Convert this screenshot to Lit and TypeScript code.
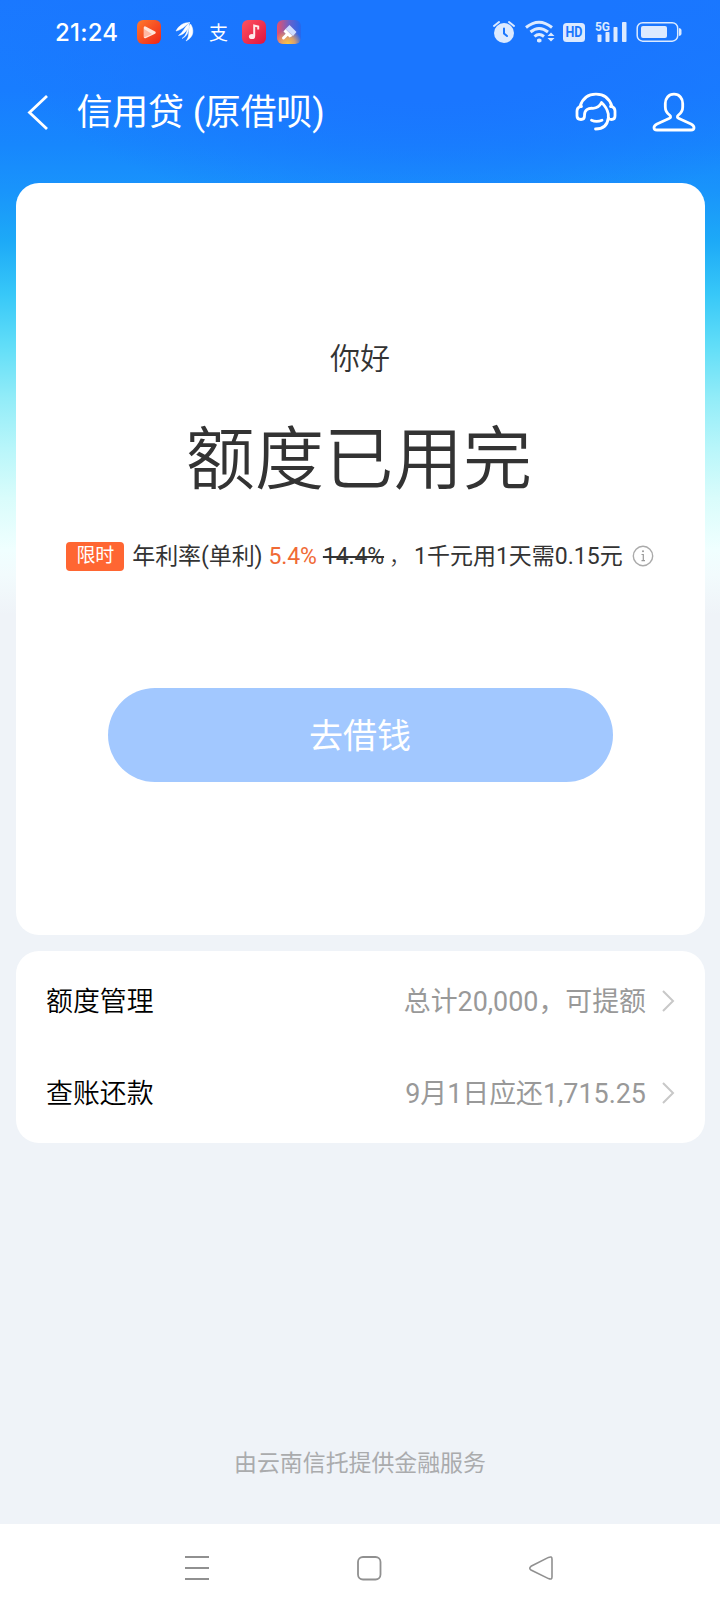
import { LitElement, html, css } from "lit";
import { customElement } from "lit/decorators.js";

@customElement("status-bar")
class StatusBar extends LitElement {
  static styles = css`
    :host { display: flex; height: 64px; align-items: center; padding: 0 38px 0 55px; color: #fff; }
    svg { display: block; flex: none; }
    .time { font: 500 24px/30px Inter, Roboto, sans-serif; width: 82px; letter-spacing: 0.2px; padding-top: 2px; white-space: nowrap; }
    .apps { display: flex; align-items: center; }
    .wing { margin-left: 14px; }
    .zhi { width: 20px; margin: 0 13px 0 14px; font: 400 19px/24px "Noto Sans CJK SC", sans-serif; }
    .pen { margin-left: 11px; }
    .system { display: flex; align-items: center; margin-left: auto; }
    text { font-family: Roboto, sans-serif; font-weight: 700; }
  `;
  render() {
    return html`
      <span class="time">21:24</span>
      <div class="apps">
        <svg width="24" height="24" viewBox="0 0 24 24">
          <defs><linearGradient id="v" x1="0" y1="0" x2="1" y2="1"><stop offset="0" stop-color="#ff7a2e" /><stop offset="1" stop-color="#ee2418" /></linearGradient></defs>
          <rect width="24" height="24" rx="6" fill="url(#v)" />
          <path d="M8 7.500V17L17.500 12.500Z" fill="#ffe6dd" stroke="#ffe6dd" stroke-width="2.500" stroke-linejoin="round" />
          <path d="M7 9V17.500L15 14Z" fill="#ffb9a5" />
        </svg>
        <svg class="wing" width="20" height="22" viewBox="0 0 20 22">
          <path d="M1 10C4 4.500 8 1.500 15 1.500C11 3.500 8 8.500 1 10ZM3.500 14.500C9 11 9.500 5 14.500 2.500C13.500 7 10 14 3.500 14.500ZM11 20C15.500 15 12.500 8.500 15.500 3C19 8 19.500 16 11 20ZM7 17.500C12.500 14 11.500 8 14.500 4.500C13 9 14 14.500 7 17.500Z" fill="#fff" stroke="#fff" stroke-width=".5" />
        </svg>
        <span class="zhi">支</span>
        <svg width="24" height="24" viewBox="0 0 24 24">
          <defs><linearGradient id="m" x1="0" y1="0" x2="1" y2="1"><stop offset="0" stop-color="#ff5360" /><stop offset="1" stop-color="#df123f" /></linearGradient></defs>
          <rect width="24" height="24" rx="6" fill="url(#m)" />
          <ellipse cx="10" cy="16.500" rx="3.100" ry="2.600" fill="#ffe9ea" />
          <path d="M12.200 16V5.500L16.200 6.500V9.500" fill="none" stroke="#ffe9ea" stroke-width="2" />
        </svg>
        <svg class="pen" width="24" height="24" viewBox="0 0 24 24">
          <defs>
            <linearGradient id="p" x1="0" y1="0" x2="1" y2="0"><stop offset="0" stop-color="#e9506b" /><stop offset=".5" stop-color="#6a62c8" /><stop offset="1" stop-color="#2468ee" /></linearGradient>
            <radialGradient id="q" cx=".45" cy="1" r=".6"><stop offset="0" stop-color="#ffc83c" /><stop offset=".5" stop-color="#f5ae58" stop-opacity=".8" /><stop offset="1" stop-color="#f5ae58" stop-opacity="0" /></radialGradient>
          </defs>
          <rect width="24" height="24" rx="6" fill="url(#p)" />
          <rect width="24" height="24" rx="6" fill="url(#q)" />
          <path d="M10 14.500L6.500 18" stroke="#fff" stroke-width="3" stroke-linecap="round" />
          <path d="M12.500 5L19.500 12L16 16L8.500 9Z" fill="#cfdcff" />
          <path d="M8.500 9L15.500 16L12.500 17.500L6.500 11.500Z" fill="#fff" />
        </svg>
      </div>
      <div class="system">
        <svg width="190" height="26" viewBox="0 0 190 26" fill="#dceaff">
          <circle cx="12" cy="14" r="10" />
          <path d="M2 7L7 3M17 3L22 7" stroke="#dceaff" stroke-width="2" stroke-linecap="round" />
          <path d="M12 9.500V14.500L15 17" fill="none" stroke="#1a77fe" stroke-width="2" stroke-linecap="round" />
          <g fill="none" stroke="#dceaff" stroke-width="3">
            <path d="M34 8.500Q47 -2 60 8.500M38.500 13Q47 6 56 13M42.500 17.500Q47 13.500 52 17.500" />
          </g>
          <path d="M45 20.500Q47.200 18.500 49.500 20.500V22.500Q47 24.500 45 22.500ZM55.500 17L59 13.500L62.500 17ZM55.500 19H62.500L59 22.500Z" />
          <rect x="71" y="4" width="22" height="19" rx="3.500" />
          <text x="82" y="18.400" font-size="14" text-anchor="middle" fill="#1a77fe" textLength="17" lengthAdjust="spacingAndGlyphs">HD</text>
          <text x="103" y="11.500" font-size="13.500" textLength="15" lengthAdjust="spacingAndGlyphs">5G</text>
          <rect x="105.500" y="15.500" width="4" height="7.500" rx=".8" /><rect x="113.500" y="13" width="4" height="10" rx=".8" />
          <rect x="121.500" y="8" width="4" height="15" rx=".8" /><rect x="130" y="3" width="4.500" height="20" rx=".8" />
          <rect x="145.200" y="3.700" width="40.500" height="18.500" rx="5.500" fill="none" stroke="#dceaff" stroke-width="1.500" />
          <rect x="149" y="7" width="26" height="12" rx="2" />
          <path d="M187 9Q189.500 9.500 189.500 11V15Q189.500 16.500 187 17Z" />
        </svg>
      </div>
    `;
  }
}

@customElement("title-bar")
class TitleBar extends LitElement {
  static styles = css`
    :host { display: flex; height: 96px; align-items: center; padding: 0 24.500px 0 26px; color: #fff; }
    svg { display: block; flex: none; fill: none; stroke: #fff; stroke-width: 2.800; stroke-linecap: round; stroke-linejoin: round; }
    .title { font: 400 36px/48px Roboto, "Noto Sans CJK SC", sans-serif; margin-left: 26.500px; padding-top: 2px; letter-spacing: -0.2px; white-space: nowrap; }
    .service { margin-left: auto; }
    .profile { margin-left: 34px; }
  `;
  render() {
    return html`
      <svg width="24" height="40" viewBox="0 0 24 40"><path d="M21 4L3.500 20.500L21 37" stroke-linecap="butt" stroke-linejoin="miter" /></svg>
      <span class="title">信用贷 (原借呗)</span>
      <svg class="service" width="44" height="42" viewBox="0 0 44 42">
        <path d="M6 15.500C8.500 7.500 14.500 3.200 22 3.200S35.500 7.500 38 15.500" />
        <path d="M7.500 15.500H6.500Q3 16.500 3 20V25Q3 28.500 7 28.500Q10.500 28.500 10.500 25V24C10.500 19 14 16.800 19 17.300Q25 17 27.500 11.500Q33 16.500 34.300 23V26Q34.500 28.500 37.500 28.500Q41 28.500 41 25V20Q41 16.500 37.500 15.500H36.500" />
        <path d="M34.300 27Q33 38 21.500 38M17.500 29.300Q22.500 31.500 28 29.300" />
      </svg>
      <svg class="profile" width="44" height="42" viewBox="0 0 44 42">
        <path d="M22 3.200C16.500 3.200 13.300 7.500 13.300 12.500V16C13.300 20 15.500 22.500 17.500 24Q20 26.200 17 27.500L5 33C1 35 1 39 5 39H39C43 39 43 35 39 33L27 27.500Q24 26.200 26.500 24C28.500 22.500 30.700 20 30.700 16V12.500C30.700 7.500 27.500 3.200 22 3.200Z" />
      </svg>
    `;
  }
}

@customElement("quota-card")
class QuotaCard extends LitElement {
  static styles = css`
    :host { display: flex; flex-direction: column; align-items: center; box-sizing: border-box; height: 752px; padding-top: 154px; background: #fff; border-radius: 23px; color: #333; font-family: Roboto, "Noto Sans CJK SC", sans-serif; }
    .hello { font-size: 30px; line-height: 44px; font-weight: 350; }
    .headline { font-size: 69px; line-height: 96px; margin-top: 32px; padding-right: 2px; letter-spacing: 0.3px; font-weight: 350; }
    .rate { display: flex; align-items: center; height: 36px; margin-top: 29px; font-size: 23px; letter-spacing: -0.1px; white-space: nowrap; }
    .terms { line-height: 32px; padding-top: 2px; }
    .tag { box-sizing: border-box; width: 58px; height: 29px; border-radius: 4px; background: #ff6632; color: #fff; font-size: 19px; line-height: 28px; text-align: center; margin-right: 8px; }
    .now { color: #f06a35; margin: 0 6px 0 6px; }
    .old { text-decoration: line-through; text-decoration-thickness: 2px; }
    .comma { margin: 0 2px 0 5px; font-weight: 300; }
    .cost { letter-spacing: 0; }
    .info { margin-left: 9px; }
    .borrow { width: 505px; height: 94px; margin-top: 114px; padding: 0 0 2px; border: 0; border-radius: 47px; background: #a2c8ff; color: #fff; font: 400 34px/92px "Noto Sans CJK SC", sans-serif; }
  `;
  render() {
    return html`
      <div class="hello">你好</div>
      <div class="headline">额度已用完</div>
      <div class="rate">
        <span class="tag">限时</span>
        <span class="terms">年利率(单利)<span class="now">5.4%</span><span class="old">14.4%</span><span class="comma">，</span><span class="cost">1千元用1天需0.15元</span></span>
        <svg class="info" width="22" height="22" viewBox="0 0 22 22"><circle cx="11" cy="11" r="9.700" fill="none" stroke="#aaa" stroke-width="1.400" /><path d="M9.500 9.500H11.300V15.500M9.500 15.700H13" fill="none" stroke="#999" stroke-width="1.200" /><circle cx="11" cy="6.300" r="1" fill="#999" /></svg>
      </div>
      <button class="borrow">去借钱</button>
    `;
  }
}

@customElement("menu-card")
class MenuCard extends LitElement {
  static styles = css`
    :host { display: block; box-sizing: border-box; height: 192px; padding: 4px 30px 4px 30.500px; background: #fff; border-radius: 23px; font: 400 26.900px/40px Roboto, "Noto Sans CJK SC", sans-serif; }
    .row { display: flex; align-items: center; height: 92px; }
    .label { color: #000; padding-top: 2px; font-weight: 350; }
    .value { margin-left: auto; color: #999; padding-top: 1px; white-space: nowrap; }
    .arrow { margin-left: 14.500px; }
  `;
  private rows = [
    { label: "额度管理", value: "总计20,000，可提额" },
    { label: "查账还款", value: "9月1日应还1,715.25" },
  ];
  render() {
    return this.rows.map((r) => html`
      <div class="row">
        <span class="label">${r.label}</span>
        <span class="value">${r.value}</span>
        <svg class="arrow" width="14" height="24" viewBox="0 0 14 24"><path d="M2 2L12 12L2 22" fill="none" stroke="#c8c8c8" stroke-width="2" /></svg>
      </div>
    `);
  }
}

@customElement("nav-keys")
class NavKeys extends LitElement {
  static styles = css`
    :host { display: flex; flex: none; height: 88px; align-items: center; justify-content: center; gap: 146px; background: #fff; }
    svg { display: block; fill: none; stroke: #909090; stroke-width: 1.800; }
  `;
  render() {
    return html`
      <svg width="26" height="26" viewBox="0 0 26 26"><path d="M1 2H25M1 13H25M1 24H25" /></svg>
      <svg width="26" height="26" viewBox="0 0 26 26"><rect x="2" y="2" width="22.500" height="22.500" rx="5" /></svg>
      <svg width="26" height="26" viewBox="0 0 26 26"><path d="M20.500 2.400Q24 1 24 4V22Q24 25 20.500 23.600L3 15Q.500 13.200 3 11.300Z" stroke-width="1.600" /></svg>
    `;
  }
}

@customElement("app-root")
class AppRoot extends LitElement {
  static styles = css`
    :host { display: flex; flex-direction: column; height: 1612px; overflow: hidden; background:
      radial-gradient(ellipse 440px 200px at 430px 20px, #1a76ff 0, #1a76ff 40%, rgba(26,118,255,0) 100%) no-repeat,
      linear-gradient(180deg, #1a78ff 0, #187dff 90px, #1787fd 145px, #1994fb 190px, #1daaf7 242px, #38c8f8 295px, #62def8 347px, #92ecf8 398px, #b8f6fa 448px, #d9fcfb 498px, #f0ffff 550px, #f2fbfd 575px, #eff3f8 615px, #eff3f8 100%); }
    .cards { display: flex; flex-direction: column; gap: 16px; padding: 23px 15.500px 0; }
    .provider { margin: auto 0 45px; text-align: center; color: #aaabad; font: 400 22.900px/36px "Noto Sans CJK SC", sans-serif; }
    nav-keys { padding-left: 17px; }
  `;
  render() {
    return html`
      <status-bar></status-bar>
      <title-bar></title-bar>
      <main class="cards"><quota-card></quota-card><menu-card></menu-card></main>
      <footer class="provider">由云南信托提供金融服务</footer>
      <nav-keys></nav-keys>
    `;
  }
}
